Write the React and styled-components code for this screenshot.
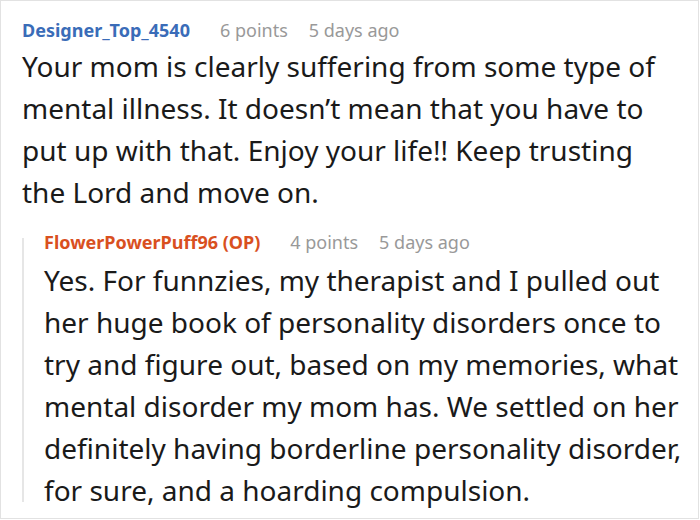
import React from "react"
import styled, { createGlobalStyle } from "styled-components"

const GlobalStyle = createGlobalStyle`
  html, body {
    margin: 0;
    padding: 0;
    background: #fff;
  }
  body {
    font-family: "Noto Sans", "Open Sans", sans-serif;
  }
`

const Frame = styled.div`
  box-sizing: border-box;
  width: 699px;
  height: 519px;
  border: 1px solid #e2e2e2;
  padding: 17px 12px 0 21px;
  overflow: hidden;
`

const Comment = styled.div`
  display: flex;
  flex-direction: column;
`

const Meta = styled.div`
  display: flex;
  align-items: baseline;
  gap: 21px;
  font-size: 18px;
  line-height: 24px;
`

const Author = styled.span`
  font-weight: 700;
  color: ${props => (props.$op ? "#d9501f" : "#3a6cb8")};
  margin-right: 9px;
`

const Stat = styled.span`
  color: #999;
`

const Body = styled.p`
  margin: ${props => props.$top}px 0 0;
  padding-right: ${props => props.$right || 0}px;
  font-size: 28px;
  line-height: 42px;
  color: #1a1a1a;
`

const Replies = styled.div`
  position: relative;
  margin-top: 17px;
  padding-left: 22px;

  &::before {
    content: "";
    position: absolute;
    left: 0;
    top: 8px;
    bottom: 9px;
    width: 2px;
    background: #e6e6e6;
  }
`

const comment = {
  author: "Designer_Top_4540",
  points: "6 points",
  age: "5 days ago",
  text: "Your mom is clearly suffering from some type of mental illness. It doesn’t mean that you have to put up with that. Enjoy your life!! Keep trusting the Lord and move on.",
  reply: {
    author: "FlowerPowerPuff96 (OP)",
    points: "4 points",
    age: "5 days ago",
    text: "Yes. For funnzies, my therapist and I pulled out her huge book of personality disorders once to try and figure out, based on my memories, what mental disorder my mom has. We settled on her definitely having borderline personality disorder, for sure, and a hoarding compulsion.",
  },
}

export default function App() {
  const c = comment
  return (
    <>
      <GlobalStyle />
      <Frame>
        <Comment>
          <Meta>
            <Author>{c.author}</Author>
            <Stat>{c.points}</Stat>
            <Stat>{c.age}</Stat>
          </Meta>
          <Body $top={3} $right={22}>{c.text}</Body>
        </Comment>
        <Replies>
          <Comment>
            <Meta>
              <Author $op>{c.reply.author}</Author>
              <Stat>{c.reply.points}</Stat>
              <Stat>{c.reply.age}</Stat>
            </Meta>
            <Body $top={5}>{c.reply.text}</Body>
          </Comment>
        </Replies>
      </Frame>
    </>
  )
}
